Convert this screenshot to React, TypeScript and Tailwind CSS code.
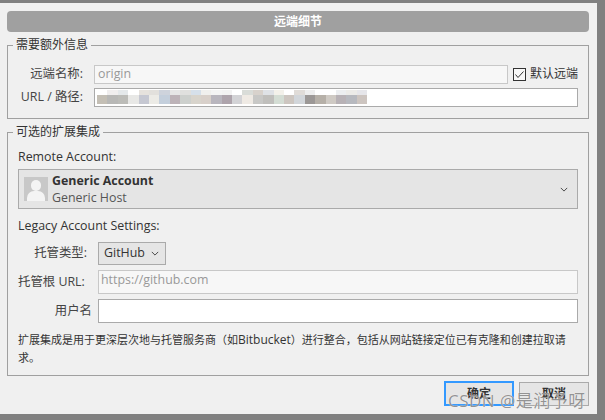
const FONT = "font-['Open_Sans','Noto_Sans_CJK_SC',sans-serif]";

// mosaic blocks that hide the url, two rows of smudged squares
const mosaicTop = ["#ffffff", "#f0eeee", "#e4e8ea", "#ffffff", "#e6e2dd", "#e2e0dc", "#ced3dc", "#e6e6e6", "#e0e0de", "#d6e0ea", "#f0f0ee", "#f4f4f4", "#f2f2f2", "#ffffff", "#d9dcd8", "#d8d2cc", "#dfe2e6", "#f3f1ea", "#ffffff", "#e0dcd8", "#eeeeee", "#ffffff", "#ffffff", "#eceef0", "#ecebe8", "#e6e6ea"];
const mosaicBottom = ["#c4bfb5", "#b8b8b6", "#bcbcb8", "#e8e8e6", "#c6c8d2", "#ecebe6", "#c4cfdc", "#bdb3b8", "#cdd0cd", "#d8d4cc", "#d8d0ca", "#b9b6be", "#aea4ac", "#d3d3d6", "#efeae4", "#c8c8c6", "#c0bfbc", "#d4ddd4", "#cdc6c0", "#d2d6da", "#9c9896", "#b6b0a8", "#cfcac4", "#b8b2b6", "#b7b9bf", "#cdc5c0"];

function Mosaic() {
  return (
    <div className="absolute left-[2px] top-[1px] flex h-[16px] w-[270px] flex-col blur-[0.5px]">
      <div className="flex h-[5px]">
        {mosaicTop.map((color, i) => (
          <div key={i} className="h-full w-[10.4px]" style={{ backgroundColor: color }} />
        ))}
      </div>
      <div className="flex h-[9px]">
        {mosaicBottom.map((color, i) => (
          <div key={i} className="h-full w-[10.4px]" style={{ backgroundColor: color }} />
        ))}
      </div>
    </div>
  );
}

function Chevron({ className }: { className?: string }) {
  return (
    <svg viewBox="0 0 10 6" className={className} fill="none" stroke="#444444" strokeWidth="1.2">
      <path d="M1 1l4 4 4-4" />
    </svg>
  );
}

export default function App() {
  return (
    <div className={`relative h-[420px] w-[605px] overflow-hidden bg-[#808080] pt-[3px] text-[12.4px] text-[#333333] ${FONT}`}>
      <div className="h-[411px] w-[597px] bg-[#f0f0f0] pl-[7px] pr-[8px] pt-[8px]">
        <div className="flex h-[21px] items-center justify-center rounded-[4px] bg-[#a0a0a0] text-[12px] font-bold text-white">
          远端细节
        </div>

        <fieldset className="mt-[5px] h-[82px] border border-[#a0a0a0] px-[10px]">
          <legend className="ml-[-5px] px-[3px] text-[12px] leading-[16px]">需要额外信息</legend>
          <div className="mt-[11px] flex h-[20px] items-center">
            <span className="w-[76px] pr-[11px] text-right text-[#444444]">远端名称:</span>
            <div className="flex h-[19px] w-[414px] items-center border border-[#c8c8c8] bg-[#f7f7f7] px-[3px] text-[#999999]">origin</div>
            <div className="ml-[5px] flex h-[13px] w-[13px] items-center justify-center border border-[#333333] bg-[#f8f8f8]">
              <svg viewBox="0 0 11 11" className="h-[11px] w-[11px]" fill="none" stroke="#333333" strokeWidth="1">
                <path d="M1.5 5.5l2.5 3 5.5-6" />
              </svg>
            </div>
            <span className="ml-[4px] whitespace-nowrap text-[12px]">默认远端</span>
          </div>
          <div className="mt-[4px] flex h-[19px] items-center">
            <span className="w-[76px] whitespace-nowrap pr-[11px] text-right text-[#444444]">URL / 路径:</span>
            <div className="relative h-[19px] w-[484px] border border-[#aaaaaa] bg-white">
              <Mosaic />
            </div>
          </div>
        </fieldset>

        <fieldset className="mt-[5px] h-[252px] border border-[#a0a0a0] px-[10px]">
          <legend className="ml-[-5px] px-[3px] text-[12px] leading-[16px]">可选的扩展集成</legend>
          <p className="mt-[9px] leading-[16px]">Remote Account:</p>
          <div className="mt-[4px] flex h-[40px] w-[560px] items-center border border-[#aaaaaa] bg-[#e5e5e5] pl-[5px] pr-[9px]">
            <div className="relative h-[24px] w-[24px] overflow-hidden bg-[#c8c8c8]">
              <div className="absolute left-[7px] top-[3px] h-[11px] w-[10px] rounded-full bg-[#f4f4f4]" />
              <div className="absolute left-[3px] top-[14px] h-[14px] w-[18px] rounded-t-[7px] bg-[#f4f4f4]" />
            </div>
            <div className="ml-[4px] flex-1">
              <p className="font-bold leading-[17px] text-[#333333]">Generic Account</p>
              <p className="leading-[17px] text-[#555555]">Generic Host</p>
            </div>
            <Chevron className="h-[5px] w-[8px]" />
          </div>

          <p className="mt-[9px] leading-[16px]">Legacy Account Settings:</p>

          <div className="mt-[8px] flex h-[23px] items-center">
            <span className="w-[80px] pr-[11px] text-right text-[#444444]">托管类型:</span>
            <div className="flex h-[23px] w-[68px] items-center justify-between border border-[#aaaaaa] bg-[#e5e5e5] pl-[5px] pr-[6px]">
              <span>GitHub</span>
              <Chevron className="h-[5px] w-[8px]" />
            </div>
          </div>

          <div className="mt-[5px] flex h-[24px] items-center">
            <span className="w-[80px] whitespace-nowrap pr-[11px] text-[#444444]">托管根 URL:</span>
            <div className="flex h-[24px] w-[480px] items-start border border-[#c8c8c8] bg-[#f7f7f7] px-[2px] leading-[17px] text-[#999999]">
              https://github.com
            </div>
          </div>

          <div className="mt-[5px] flex h-[24px] items-center">
            <span className="w-[80px] pr-[6px] text-right text-[#444444]">用户名</span>
            <div className="h-[24px] w-[480px] border border-[#aaaaaa] bg-white" />
          </div>

          <p className="mt-[8px] w-[556px] text-[11px] leading-[18px] text-[#333333]">
            {"扩展集成是用于更深层次地与托管服务商\uFF08如"}
            <span className="text-[12px]">Bitbucket</span>
            {"\uFF09进行整合\uFF0C包括从网站链接定位已有克隆和创建拉取请"}
            <br />
            {"求\u3002"}
          </p>
        </fieldset>

        <div className="mt-[5px] flex justify-end gap-[5px]">
          <button className="h-[25px] w-[70px] border-2 border-[#3399ff] bg-[#e5e5e5] text-[12px] font-bold text-[#333333]">确定</button>
          <button className="mt-[1px] h-[24px] w-[70px] border border-[#aaaaaa] bg-[#e5e5e5] text-[12px] font-bold text-[#333333]">取消</button>
        </div>
      </div>

      <span className="absolute left-[448px] top-[390px] whitespace-nowrap text-[17px] leading-[22px] tracking-[0.5px] text-[#808080]/85 [text-shadow:0_0_1px_#ffffff]">
        CSDN @是润予呀
      </span>
    </div>
  );
}
